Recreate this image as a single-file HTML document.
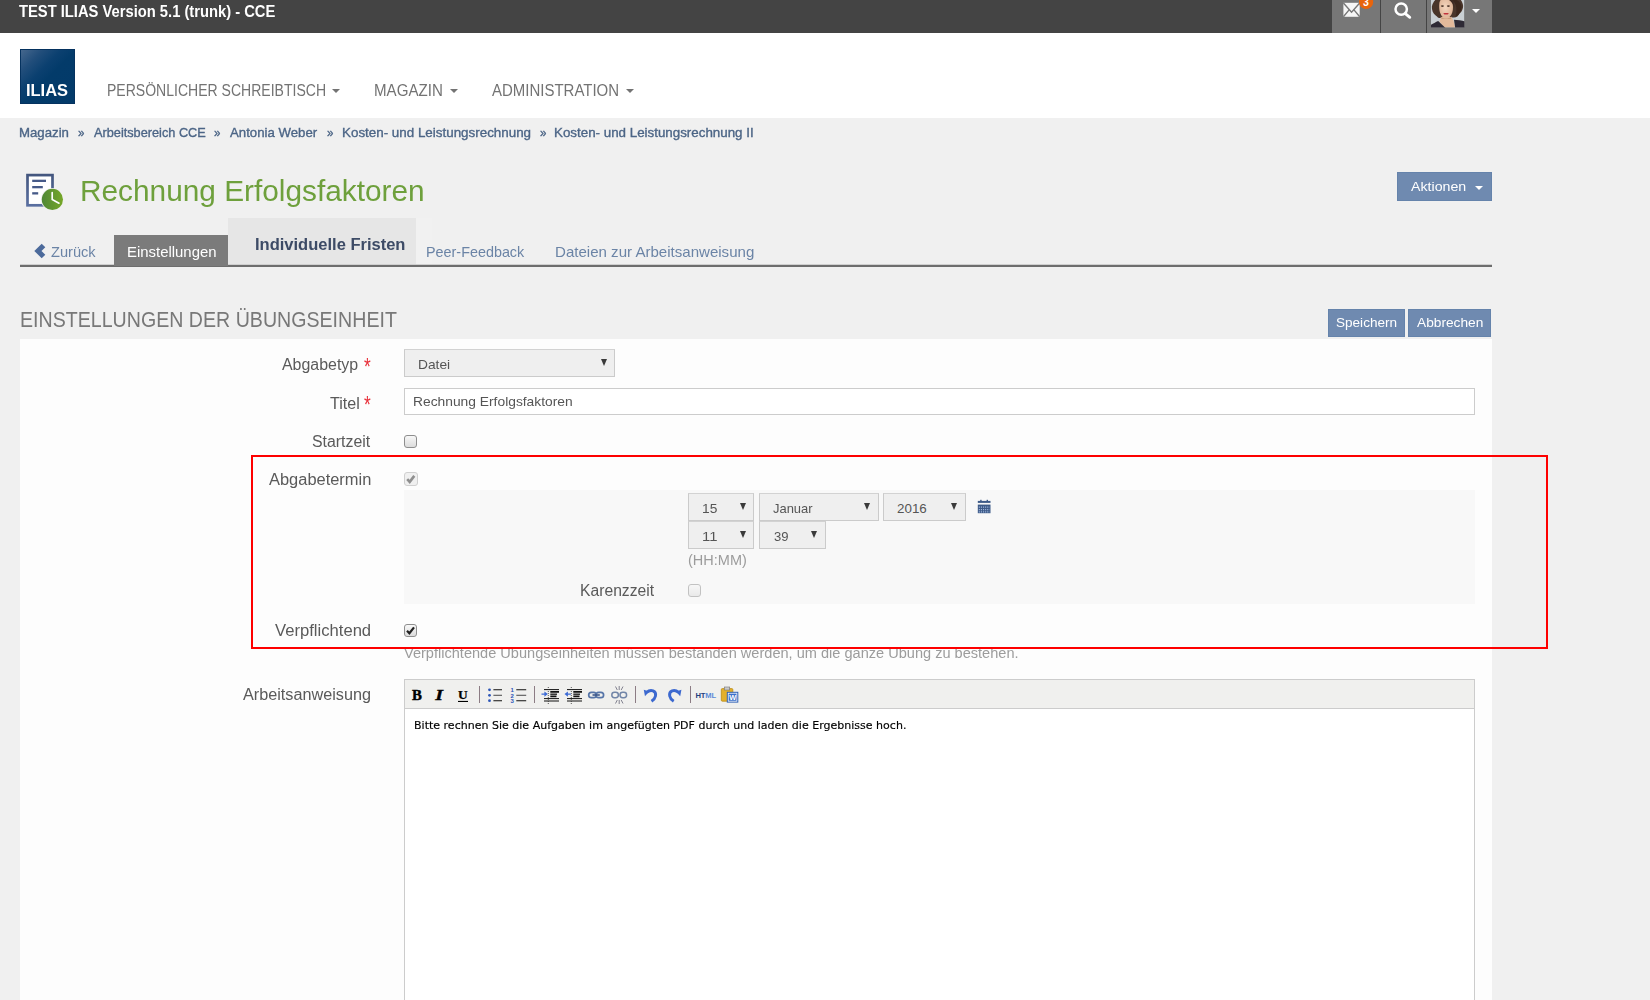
<!DOCTYPE html>
<html lang="de">
<head>
<meta charset="utf-8">
<title>Rechnung Erfolgsfaktoren</title>
<style>
*{box-sizing:border-box;margin:0;padding:0}
html,body{width:1650px;height:1000px;overflow:hidden;background:#f0f0f0;font-family:"Liberation Sans",sans-serif;color:#5c5c5c}
.abs,.t{position:absolute;white-space:nowrap}
.t{line-height:1;transform-origin:0 0}
svg{position:absolute;overflow:visible}
#topbar{left:0;top:0;width:1650px;height:33px;background:#444}
#header{left:0;top:33px;width:1650px;height:85px;background:#fff}
.tbtn{top:0;height:33px;background:#777}
#logo{left:20px;top:49px;width:55px;height:55px;border:1px solid #05325f;background:linear-gradient(135deg,#45678d 0%,#224e7b 20%,#0b4070 38%,#033b6a 52%,#033a69 100%)}
.caret{width:0;height:0;border-left:4.3px solid transparent;border-right:4.3px solid transparent;border-top:4.8px solid #737373}
.btn{background:#6f8ab0;border:1px solid #6583ab}
.sel{background:#efefef;border:1px solid #cbcbcb;border-top-color:#d2d2d2;height:27.5px}
.arr{width:0;height:0;border-left:3.8px solid transparent;border-right:3.8px solid transparent;border-top:7px solid #3a3a3a}
.cb{width:13px;height:13px;border:1px solid #8e8e8e;border-radius:3px;background:linear-gradient(#f8f8f8,#dcdcdc)}
</style>
</head>
<body>
<div class="abs" id="topbar"></div>
<div class="abs" id="header"></div>

<!-- top right buttons -->
<div class="abs tbtn" style="left:1332px;width:48px"></div>
<div class="abs tbtn" style="left:1381px;width:44.5px"></div>
<div class="abs tbtn" style="left:1426.5px;width:65.5px"></div>

<svg style="left:1340px;top:0" width="40" height="33" viewBox="1340 0 40 33">
 <rect x="1343.4" y="2.8" width="16.3" height="14" fill="#f6f6f6"/>
 <path d="M1343.4 3 L1351.55 12.2 L1359.7 3" stroke="#777" stroke-width="1.4" fill="none"/>
 <path d="M1343.4 16.8 L1349.3 9.6 M1359.7 16.8 L1353.8 9.6" stroke="#777" stroke-width="1.4" fill="none"/>
 <circle cx="1366.1" cy="1.9" r="7.1" fill="#e8640c"/>
 <text x="1366" y="5.8" font-size="10.5" font-weight="bold" fill="#fff" text-anchor="middle" font-family="'Liberation Sans',sans-serif">3</text>
</svg>
<div class="abs" style="left:1380px;top:0;width:1px;height:33px;background:#444"></div>
<div class="abs" style="left:1425.5px;top:0;width:1px;height:33px;background:#444"></div>
<svg style="left:1390px;top:0" width="30" height="33" viewBox="1390 0 30 33">
 <circle cx="1401.2" cy="9.1" r="5.7" fill="none" stroke="#fff" stroke-width="2.5"/>
 <path d="M1405.3 13.6 L1409.8 17.3" stroke="#fff" stroke-width="2.8" stroke-linecap="round"/>
</svg>
<svg style="left:1431px;top:0" width="33.4" height="27.5" viewBox="0 0 33.4 27.5">
 <defs><clipPath id="avc"><rect x="0" y="0" width="33.4" height="27.5"/></clipPath>
 <filter id="avb" x="-10%" y="-10%" width="120%" height="120%"><feGaussianBlur stdDeviation="0.45"/></filter>
 <radialGradient id="avs" cx="0.45" cy="0.45" r="0.6"><stop offset="0" stop-color="#f4d6bf"/><stop offset="1" stop-color="#dcb092"/></radialGradient></defs>
 <g clip-path="url(#avc)"><rect x="0" y="0" width="33.4" height="27.5" fill="#c9cfd3"/><g filter="url(#avb)">
 <path d="M5 -1 C2 2 0.3 6 1 9 C1.5 13 4 15 6 16.5 C7.5 18.5 10 18.5 12 17 L22 17.5 C25 18 27.5 16 28.5 13.5 C31 12 32.5 8 32 5 C31.5 2 30 0 29 -1 Z" fill="#49342a"/>
 <path d="M20 -1 C27 -1 31 3 30.5 8 C30 12 28 15.5 24.5 16.5 C26 12 26 6 23 2 Z" fill="#3a271f"/>
 <path d="M8.3 4 C8.6 0 11 -2 15 -2 C20 -2 22 2 22 7 C22 11 21 14.5 19 16.5 C17.5 18 16 18.5 14.8 18.5 C12 18.5 9.5 15 8.6 11 C8.2 8.5 8.1 6 8.3 4 Z" fill="url(#avs)"/>
 <path d="M17.5 -2 C21 -1 23.5 2 23.5 8 C22.5 5 21 2 17.5 -0.5 Z" fill="#3e2b22"/>
 <path d="M10 17 L20.5 17 L22.5 20.5 L24 27.5 L13 27.5 L8.5 21.5 Z" fill="#e3ba9b"/>
 <path d="M9.5 16.5 C12 19 17 19.5 20.5 16.5 L20 19 L10.5 19 Z" fill="#c99d7d"/>
 <ellipse cx="11.4" cy="6.1" rx="1.6" ry="0.8" fill="#4a3328"/>
 <ellipse cx="17.4" cy="6.1" rx="1.6" ry="0.8" fill="#4a3328"/>
 <path d="M12.2 13.4 C13.8 12.8 16.3 12.8 17.9 13.4 C16.8 15 13.4 15 12.2 13.4 Z" fill="#c2313a"/>
 <path d="M-1 28 L-1 25.5 C2 23.5 5 22 7.2 21 L14.5 28 Z" fill="#2f2b34"/>
 <path d="M34 28 L34 21.5 C31 20.5 26.5 20 23 19.8 L24.2 28 Z" fill="#2f2b34"/>
 </g></g>
</svg>
<div class="abs caret" style="left:1472.3px;top:8.6px;border-left-width:4.5px;border-right-width:4.5px;border-top-width:4.6px;border-top-color:#fff"></div>


<!-- logo -->
<div class="abs" id="logo"></div>

<!-- nav carets -->
<div class="abs caret" style="left:331.9px;top:88.9px"></div>
<div class="abs caret" style="left:449.9px;top:88.9px"></div>
<div class="abs caret" style="left:625.5px;top:88.9px"></div>


<svg style="left:20px;top:168px" width="50" height="46" viewBox="20 168 50 46">
 <defs>
  <linearGradient id="gdoc" x1="0" y1="0" x2="0" y2="1"><stop offset="0" stop-color="#44577f"/><stop offset="1" stop-color="#5a6fa0"/></linearGradient>
  <linearGradient id="gclk" x1="0" y1="0" x2="1" y2="0"><stop offset="0" stop-color="#4f8736"/><stop offset="1" stop-color="#76a728"/></linearGradient>
 </defs>
 <rect x="27.5" y="175.1" width="25" height="30.2" fill="#fff" stroke="url(#gdoc)" stroke-width="2.7"/>
 <rect x="32.2" y="179.7" width="13.8" height="2.3" fill="#465a88"/>
 <rect x="32.2" y="186" width="10.6" height="2.3" fill="#465a88"/>
 <rect x="32.2" y="192.2" width="6" height="2.3" fill="#465a88"/>
 <circle cx="52.4" cy="199.4" r="11.4" fill="#f0f0f0"/>
 <circle cx="52.4" cy="199.4" r="10.6" fill="url(#gclk)"/>
 <path d="M52.2 192.6 L52.2 199.6 L59 203.2" fill="none" stroke="#fff" stroke-width="1.7" stroke-linecap="round" stroke-linejoin="round"/>
</svg>


<!-- Aktionen -->
<div class="abs btn" style="left:1397px;top:172px;width:95px;height:29px"></div>
<div class="abs caret" style="left:1474.5px;top:185.5px;border-top-color:#fff"></div>

<!-- tabs -->
<div class="abs" style="left:20px;top:264px;width:1472px;height:3px;background:linear-gradient(#cfcfcf 0,#cfcfcf 1px,#6d6d6d 1px,#6d6d6d 3px)"></div>
<div class="abs" style="left:114px;top:235px;width:114px;height:30.5px;background:#7b7b7b"></div>
<svg style="left:30px;top:240px" width="20" height="22" viewBox="30 240 20 22"><path d="M34.3 251 L41.7 243.8 L45.3 247.3 L41.5 251 L45.3 254.7 L41.7 258.2 Z" fill="#4c6a9b"/></svg>
<div class="abs" style="left:416px;top:218px;width:16px;height:46px;background:#f1f1f1"></div>
<div class="abs" style="left:228px;top:218px;width:188px;height:46px;background:#e6e6e6"></div>

<!-- heading buttons -->
<div class="abs btn" style="left:1328px;top:309px;width:77px;height:28px"></div>
<div class="abs btn" style="left:1408px;top:309px;width:83px;height:28px"></div>

<!-- form panel -->
<div class="abs" style="left:20px;top:338.5px;width:1472px;height:662px;background:#fdfdfd"></div>

<div class="abs sel" style="left:404px;top:349px;width:211px"></div>
<div class="abs arr" style="left:600.5px;top:359px"></div>

<div class="abs" style="left:404px;top:388px;width:1071px;height:27px;background:#fff;border:1px solid #ccc"></div>

<div class="abs cb" style="left:404px;top:435px"></div>

<!-- red box content -->
<div class="abs cb" style="left:404px;top:472px;width:13.5px;height:14px;border-color:#d0d0d0;background:#f0f0f0"></div>
<svg style="left:404px;top:472px" width="14" height="14" viewBox="0 0 14 14"><path d="M3.2 7.2 L5.7 9.9 L10.3 3.9" fill="none" stroke="#8f8f8f" stroke-width="2.6"/></svg>
<div class="abs" style="left:404px;top:490.3px;width:1071px;height:113.8px;background:#f8f8f8"></div>
<div class="abs sel" style="left:687.8px;top:493px;width:66.7px"></div><div class="abs arr" style="left:740.3px;top:503px"></div>
<div class="abs sel" style="left:759.3px;top:493px;width:119.7px"></div><div class="abs arr" style="left:864.1px;top:503px"></div>
<div class="abs sel" style="left:883px;top:493px;width:82.6px"></div><div class="abs arr" style="left:951.1px;top:503px"></div>
<div class="abs sel" style="left:687.8px;top:521px;width:66.7px"></div><div class="abs arr" style="left:740.3px;top:531px"></div>
<div class="abs sel" style="left:759.3px;top:521px;width:66.6px"></div><div class="abs arr" style="left:811.2px;top:531px"></div>

<svg style="left:976px;top:498px" width="16" height="17" viewBox="976 498 16 17">
 <rect x="980.2" y="499.8" width="1.4" height="1.6" fill="#3d5a88"/>
 <rect x="986.6" y="499.8" width="1.4" height="1.6" fill="#3d5a88"/>
 <rect x="977.8" y="500.9" width="12.7" height="2" fill="#3d5a88"/>
 <rect x="977.8" y="504.6" width="12.7" height="8.6" fill="#3d5a88"/>
 <path d="M978.8 507.2 H989.6 M978.8 509.6 H989.6 M978.8 511.8 H989.6" stroke="#9fb6dc" stroke-width="1.2" stroke-dasharray="1.1 1"/>
</svg>

<div class="abs cb" style="left:687.8px;top:583.5px;opacity:.5"></div>

<div class="abs cb" style="left:404px;top:624.2px"></div>
<svg style="left:404px;top:624.2px" width="13" height="13" viewBox="0 0 13 13"><path d="M3 6.8 L5.4 9.3 L10 3.4" fill="none" stroke="#222" stroke-width="2.2"/></svg>

<!-- editor -->
<div class="abs" style="left:404px;top:679px;width:1071px;height:330px;background:#fff;border:1px solid #ccc"></div>
<div class="abs" style="left:404px;top:679px;width:1071px;height:30px;background:#f0f0ee;border:1px solid #ccc"></div>

<svg style="left:404px;top:679px" width="350" height="30" viewBox="404 679 350 30">
 <text x="412" y="699.6" font-size="14.8" font-weight="bold" fill="#000" stroke="#000" stroke-width="0.45" font-family="'Liberation Serif',serif">B</text>
 <text x="0" y="0" transform="translate(435.2 699.6) scale(1.35 1)" font-size="14.8" font-weight="bold" font-style="italic" fill="#000" stroke="#000" stroke-width="0.3" font-family="'Liberation Serif',serif">I</text>
 <text x="457.9" y="698.9" font-size="13.4" font-weight="bold" fill="#000" stroke="#000" stroke-width="0.25" font-family="'Liberation Serif',serif">U</text>
 <rect x="458" y="700.9" width="10" height="1.1" fill="#000"/>
 <g fill="#8c7c84"><rect x="479" y="686" width="1" height="17"/><rect x="534" y="686" width="1" height="17"/><rect x="635" y="686" width="1" height="17"/><rect x="690" y="686" width="1" height="17"/></g>
 <!-- bullet list -->
 <g fill="#2d56b8"><circle cx="489.5" cy="689.8" r="1.4"/><circle cx="489.5" cy="695.3" r="1.4"/><circle cx="489.5" cy="700.7" r="1.4"/></g>
 <path d="M493.4 689.8 H502 M493.4 700.7 H502" stroke="#111" stroke-width="1.1"/><path d="M493.4 695.3 H502" stroke="#555" stroke-width="1.1"/>
 <!-- num list -->
 <g fill="#2d56b8" font-size="6" font-weight="bold" font-family="'Liberation Sans',sans-serif"><text x="510.4" y="692">1</text><text x="510.4" y="697.5">2</text><text x="510.4" y="703">3</text></g>
 <path d="M516.3 689.8 H526.2 M516.3 700.7 H526.2" stroke="#111" stroke-width="1.1"/><path d="M516.3 695.3 H526.2" stroke="#555" stroke-width="1.1"/>
 <!-- indent -->
 <g id="ind"><path d="M544 689.6 H559 M544 698.6 H559 M544 701 H559" stroke="#111" stroke-width="1" />
 <path d="M550.3 691.9 H559 M550.3 696.4 H556.5" stroke="#111" stroke-width="1.6"/><path d="M550.3 694.2 H557" stroke="#222" stroke-width="1.4"/>
 <path d="M548.3 687 V704" stroke="#333" stroke-width="0.8" stroke-dasharray="1 1"/></g>
 <path d="M541.5 693.4 H544.4 V691.4 L547.8 694.1 L544.4 696.8 V694.8 H541.5 Z" fill="#3b6ad6"/>
 <use href="#ind" x="23"/>
 <path d="M570.8 693.4 H567.9 V691.4 L564.5 694.1 L567.9 696.8 V694.8 H570.8 Z" fill="#3b6ad6"/>
 <!-- link -->
 <g fill="none" stroke="#5675a8" stroke-width="1.7"><rect x="588.7" y="692.3" width="7.6" height="5.4" rx="2.7"/><rect x="596" y="692.3" width="7.6" height="5.4" rx="2.7"/></g>
 <path d="M592.5 695 H599.8" stroke="#3d5788" stroke-width="1.6"/>
 <!-- unlink -->
 <g fill="none" stroke="#7286a8" stroke-width="1.5"><rect x="611.8" y="692.3" width="6.6" height="5.4" rx="2.7"/><rect x="620" y="692.3" width="6.6" height="5.4" rx="2.7"/></g>
 <path d="M619.2 686 V690 M615.5 686.5 L617.3 690 M623 686.5 L621.2 690 M619.2 704 V700 M615.5 703.5 L617.3 700 M623 703.5 L621.2 700" stroke="#667" stroke-width="0.8"/>
 <!-- undo -->
 <path d="M646.5 692.5 C651 688.5 656.5 691 655.5 696 C655 698.5 653.5 700 651.5 701.3" fill="none" stroke="#3c69cf" stroke-width="2.9"/>
 <path d="M643.8 689.8 L649.2 691.6 L645 696.2 Z" fill="#3c69cf"/>
 <!-- redo -->
 <path d="M678.7 692.5 C674.2 688.5 668.7 691 669.7 696 C670.2 698.5 671.7 700 673.7 701.3" fill="none" stroke="#3c69cf" stroke-width="2.9"/>
 <path d="M681.4 689.8 L676 691.6 L680.2 696.2 Z" fill="#3c69cf"/>
 <!-- html -->
 <text x="695.4" y="697.9" font-size="7.6" font-weight="bold" fill="#1f417f" font-family="'Liberation Sans',sans-serif" letter-spacing="-0.1">HT<tspan fill="#5b8bd8">ML</tspan></text>
 <!-- paste word -->
 <rect x="721.3" y="688.6" width="11.5" height="12.6" rx="1" fill="#e3b02a" stroke="#b98a17" stroke-width="0.8"/>
 <rect x="724.3" y="687" width="5.4" height="3" fill="#c9c9c9" stroke="#777" stroke-width="0.6"/>
 <rect x="727.3" y="692.3" width="10.5" height="9.8" fill="#fff" stroke="#2d5fb5" stroke-width="1"/>
 <rect x="728.6" y="693.6" width="7.9" height="7.2" fill="#3a6fca"/>
 <text x="729.2" y="700.4" font-size="7.4" font-weight="bold" fill="#fff" font-family="'Liberation Sans',sans-serif">W</text>
</svg>


<div class="t" style="left:19.00px;top:2.72px;font-size:16.4px;color:#fff;transform:scaleX(0.8992);font-weight:bold;">TEST ILIAS Version 5.1 (trunk) - CCE</div>
<div class="t" style="left:25.88px;top:82.19px;font-size:16.2px;color:#fff;transform:scaleX(1.0155);font-weight:bold;">ILIAS</div>
<div class="t" style="left:107.31px;top:82.63px;font-size:15.8px;color:#737373;transform:scaleX(0.8881);">PERSÖNLICHER SCHREIBTISCH</div>
<div class="t" style="left:374.24px;top:82.63px;font-size:15.8px;color:#737373;transform:scaleX(0.9567);">MAGAZIN</div>
<div class="t" style="left:491.60px;top:82.63px;font-size:15.8px;color:#737373;transform:scaleX(0.9486);">ADMINISTRATION</div>
<div class="t" style="left:18.88px;top:126.40px;font-size:13px;color:#4c6586;transform:scaleX(1.0165);-webkit-text-stroke:0.35px #4c6586;">Magazin</div>
<div class="t" style="left:77.60px;top:126.40px;font-size:13px;color:#4c6586;transform:scaleX(0.8857);-webkit-text-stroke:0.35px #4c6586;">»</div>
<div class="t" style="left:93.50px;top:126.40px;font-size:13px;color:#4c6586;transform:scaleX(0.9792);-webkit-text-stroke:0.35px #4c6586;">Arbeitsbereich CCE</div>
<div class="t" style="left:214.30px;top:126.40px;font-size:13px;color:#4c6586;transform:scaleX(0.8857);-webkit-text-stroke:0.35px #4c6586;">»</div>
<div class="t" style="left:230.40px;top:126.40px;font-size:13px;color:#4c6586;transform:scaleX(1.0159);-webkit-text-stroke:0.35px #4c6586;">Antonia Weber</div>
<div class="t" style="left:327.30px;top:126.40px;font-size:13px;color:#4c6586;transform:scaleX(0.8857);-webkit-text-stroke:0.35px #4c6586;">»</div>
<div class="t" style="left:341.97px;top:126.40px;font-size:13px;color:#4c6586;transform:scaleX(1.0299);-webkit-text-stroke:0.35px #4c6586;">Kosten- und Leistungsrechnung</div>
<div class="t" style="left:539.50px;top:126.40px;font-size:13px;color:#4c6586;transform:scaleX(0.8857);-webkit-text-stroke:0.35px #4c6586;">»</div>
<div class="t" style="left:553.97px;top:126.40px;font-size:13px;color:#4c6586;transform:scaleX(1.0270);-webkit-text-stroke:0.35px #4c6586;">Kosten- und Leistungsrechnung II</div>
<div class="t" style="left:79.76px;top:177.08px;font-size:29.2px;color:#6ea03c;transform:scaleX(1.0214);">Rechnung Erfolgsfaktoren</div>
<div class="t" style="left:1410.70px;top:180.23px;font-size:13.2px;color:#fff;transform:scaleX(1.0748);">Aktionen</div>
<div class="t" style="left:50.80px;top:245.13px;font-size:14.5px;color:#6b84a6;transform:scaleX(1.0075);">Zurück</div>
<div class="t" style="left:127.17px;top:245.13px;font-size:14.5px;color:#fff;transform:scaleX(1.0279);">Einstellungen</div>
<div class="t" style="left:254.84px;top:235.94px;font-size:17.2px;color:#3d4b66;transform:scaleX(0.9605);font-weight:bold;">Individuelle Fristen</div>
<div class="t" style="left:426.01px;top:245.13px;font-size:14.5px;color:#6b84a6;transform:scaleX(0.9910);">Peer-Feedback</div>
<div class="t" style="left:555.46px;top:245.13px;font-size:14.5px;color:#6b84a6;transform:scaleX(1.0388);">Dateien zur Arbeitsanweisung</div>
<div class="t" style="left:19.87px;top:309.05px;font-size:21.2px;color:#787878;transform:scaleX(0.9252);">EINSTELLUNGEN DER ÜBUNGSEINHEIT</div>
<div class="t" style="left:1336.30px;top:316.13px;font-size:13.2px;color:#fff;transform:scaleX(1.0280);">Speichern</div>
<div class="t" style="left:1417.00px;top:316.13px;font-size:13.2px;color:#fff;transform:scaleX(1.0401);">Abbrechen</div>
<div class="t" style="left:282.40px;top:357.19px;font-size:15.6px;color:#5a5a5a;transform:scaleX(1.0215);">Abgabetyp</div>
<div class="t" style="left:363.70px;top:355.78px;font-size:23.3px;color:#e8303a;transform:scaleX(0.7444);">*</div>
<div class="t" style="left:329.60px;top:395.69px;font-size:15.6px;color:#5a5a5a;transform:scaleX(1.0311);">Titel</div>
<div class="t" style="left:363.70px;top:394.28px;font-size:23.3px;color:#e8303a;transform:scaleX(0.7444);">*</div>
<div class="t" style="left:311.70px;top:434.09px;font-size:15.6px;color:#5a5a5a;transform:scaleX(1.0179);">Startzeit</div>
<div class="t" style="left:268.80px;top:471.89px;font-size:15.6px;color:#5a5a5a;transform:scaleX(1.0538);">Abgabetermin</div>
<div class="t" style="left:580.19px;top:583.19px;font-size:15.6px;color:#5a5a5a;transform:scaleX(1.0062);">Karenzzeit</div>
<div class="t" style="left:275.00px;top:623.39px;font-size:15.6px;color:#5a5a5a;transform:scaleX(1.0661);">Verpflichtend</div>
<div class="t" style="left:243.30px;top:687.09px;font-size:15.6px;color:#5a5a5a;transform:scaleX(1.0399);">Arbeitsanweisung</div>
<div class="t" style="left:417.87px;top:357.96px;font-size:13.4px;color:#555;transform:scaleX(1.0269);">Datei</div>
<div class="t" style="left:413.37px;top:395.46px;font-size:13.4px;color:#555;transform:scaleX(1.0314);">Rechnung Erfolgsfaktoren</div>
<div class="t" style="left:701.87px;top:501.56px;font-size:13.4px;color:#555;transform:scaleX(1.0262);">15</div>
<div class="t" style="left:772.80px;top:501.56px;font-size:13.4px;color:#555;transform:scaleX(0.9666);">Januar</div>
<div class="t" style="left:897.00px;top:501.56px;font-size:13.4px;color:#555;">2016</div>
<div class="t" style="left:701.79px;top:529.56px;font-size:13.4px;color:#555;transform:scaleX(1.1082);">11</div>
<div class="t" style="left:773.80px;top:529.56px;font-size:13.4px;color:#555;transform:scaleX(0.9760);">39</div>
<div class="t" style="left:687.80px;top:552.65px;font-size:14px;color:#9c9c9c;transform:scaleX(1.0357);">(HH:MM)</div>
<div class="t" style="left:403.80px;top:646.25px;font-size:14px;color:#9c9c9c;transform:scaleX(1.0403);">Verpflichtende Übungseinheiten müssen bestanden werden, um die ganze Übung zu bestehen.</div>
<div class="t" style="left:414.20px;top:721.04px;font-size:10px;color:#000;transform:scaleX(1.1027);font-family:'DejaVu Sans',sans-serif;-webkit-text-stroke:0.15px #000;">Bitte rechnen Sie die Aufgaben im angefügten PDF durch und laden die Ergebnisse hoch.</div>

<div class="abs" style="left:253px;top:640px;width:1239px;height:7px;background:#fdfdfd"></div>
<div class="abs" style="left:251px;top:455px;width:1297px;height:194px;border:2px solid #fe0000"></div>
</body>
</html>
